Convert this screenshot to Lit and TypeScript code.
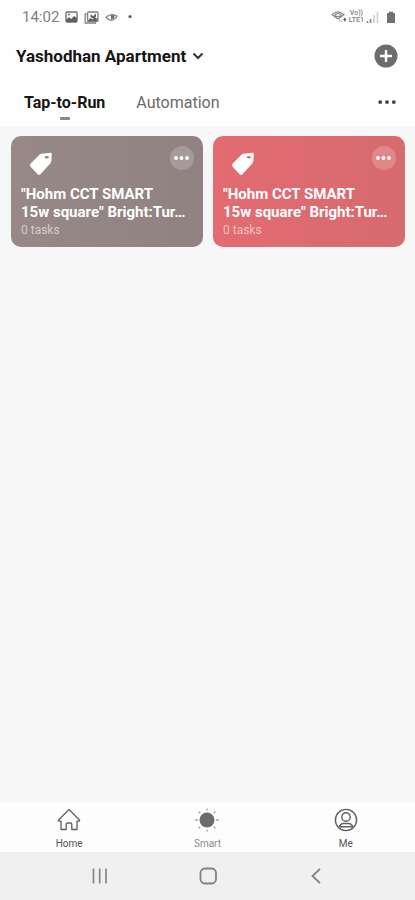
import { LitElement, html, svg, css } from "lit";
import { customElement, property } from "lit/decorators.js";

const tagIcon = svg`
  <path d="M12.4 1.8 L21.4 .8 Q22.9 .7 22.8 2.2 L22.4 8.8 Q22.3 10.2 21.3 11.4 L11.4 22.2 Q10 23.6 8.6 22.2 L1.4 14.6 Q.2 13.2 1.5 11.8 L10.4 2.8 Q11.2 2 12.4 1.8 Z" fill="#fff"/>
  <ellipse cx="17.8" cy="5.2" rx="1.9" ry="1.3" fill="var(--tone)"/>`;

@customElement("scene-card")
export class SceneCard extends LitElement {
  @property() first = "";
  @property() second = "";
  @property() tasks = "";

  static styles = css`
    :host {
      display: block;
      position: relative;
      box-sizing: border-box;
      min-width: 0;
      padding: 16px 10px 9px;
      border-radius: 10px;
      background: linear-gradient(90deg, var(--tone-start), var(--tone));
      color: #fff;
    }
    .tag {
      display: block;
      width: 24px;
      height: 24px;
      margin-left: 8px;
    }
    .more {
      position: absolute;
      top: 10px;
      right: 9px;
      width: 24px;
      height: 24px;
      padding: 0;
      border: 0;
      border-radius: 50%;
      background: rgba(255, 255, 255, 0.2);
    }
    .more svg {
      display: block;
    }
    h2 {
      margin: 9px 0 0;
      font-size: 15px;
      line-height: 18px;
      font-weight: 700;
      white-space: nowrap;
      overflow: hidden;
    }
    p {
      margin: 2px 0 0;
      font-size: 12px;
      line-height: 15px;
      color: rgba(255, 255, 255, 0.58);
    }
  `;

  render() {
    return html`
      <svg class="tag" viewBox="0 0 24 24" aria-hidden="true">${tagIcon}</svg>
      <button class="more" aria-label="More options">
        <svg width="24" height="24" viewBox="0 0 24 24" fill="#fff">
          <circle cx="6" cy="12" r="1.9" />
          <circle cx="11.5" cy="12" r="1.9" />
          <circle cx="17" cy="12" r="1.9" />
        </svg>
      </button>
      <h2>${this.first}<br />${this.second}</h2>
      <p>${this.tasks}</p>
    `;
  }
}

@customElement("app-root")
export class AppRoot extends LitElement {
  static styles = css`
    :host {
      display: flex;
      flex-direction: column;
      min-height: 100vh;
      background: #f7f7f7;
      font-family: Roboto, "Liberation Sans", sans-serif;
      color: #161616;
    }
    svg {
      display: block;
    }
    button {
      padding: 0;
      border: 0;
      background: none;
      font: inherit;
      color: inherit;
    }
    .top {
      background: #fefefe;
    }
    .status {
      display: flex;
      align-items: center;
      justify-content: space-between;
      height: 34px;
      padding: 0 19px 0 22px;
      font-size: 15px;
      color: #808080;
    }
    .group {
      display: flex;
      align-items: center;
    }
    .notices {
      gap: 6px;
    }
    .signals {
      gap: 2px;
    }
    .volte {
      display: grid;
      font-size: 7px;
      line-height: 7px;
      font-weight: 500;
      text-align: center;
    }
    .battery {
      margin-left: 5px;
    }
    .header {
      display: flex;
      align-items: center;
      justify-content: space-between;
      height: 44px;
      padding: 0 17px 0 16px;
    }
    .place {
      display: flex;
      align-items: center;
      gap: 6px;
      font-size: 17px;
      font-weight: 700;
    }
    .tabs {
      display: flex;
      align-items: center;
      height: 48px;
      padding: 0 18px 0 24px;
      font-size: 16px;
    }
    .tab {
      position: relative;
      height: 32px;
      margin-right: 31px;
      color: #6a6a6a;
    }
    .current {
      color: #161616;
      font-weight: 700;
    }
    .current::after {
      content: "";
      position: absolute;
      left: 50%;
      bottom: -2px;
      width: 10px;
      height: 3px;
      margin-left: -5px;
      border-radius: 1px;
      background: #888;
    }
    .menu {
      margin-left: auto;
    }
    main {
      flex: 1;
      display: grid;
      grid-template-columns: 1fr 1fr;
      align-content: start;
      gap: 10px;
      padding: 10px 10px 10px 11px;
    }
    .grey {
      --tone-start: #988988;
      --tone: #8f8280;
    }
    .red {
      --tone-start: #e36b71;
      --tone: #d66b70;
    }
    .bottom {
      display: grid;
      grid-template-columns: repeat(3, 1fr);
      height: 49px;
      background: #fdfdfd;
    }
    .item {
      display: flex;
      flex-direction: column;
      align-items: center;
      gap: 7px;
      padding-top: 5px;
      font-size: 10px;
      line-height: 10px;
      color: #555;
      text-decoration: none;
    }
    .chosen {
      color: #8c8c8c;
    }
    .system {
      display: flex;
      align-items: center;
      justify-content: center;
      gap: 84px;
      height: 48px;
      background: #f0f0f0;
    }
  `;

  render() {
    return html`
      <div class="top">
        <div class="status">
          <div class="group notices">
            <span>14:02</span>
            <svg width="13" height="12" viewBox="0 0 13 12" aria-hidden="true">
              <rect x="1" y="1" width="11" height="10" rx="1" fill="none" stroke="#707070" stroke-width="1.4" />
              <path d="M1 9 L4 6 L6 8 L9 5 L12 7 V11 H1Z" fill="#606060" />
              <circle cx="4" cy="3.6" r="1" fill="#707070" />
            </svg>
            <svg width="15" height="13" viewBox="0 0 15 13" aria-hidden="true">
              <path d="M2.6 3 H1.2 V12 H11.5 V10.5" fill="none" stroke="#808080" stroke-width="1.3" />
              <rect x="3.6" y="1" width="10.4" height="9.4" rx="1" fill="none" stroke="#808080" stroke-width="1.3" />
              <path d="M4 9.5 L6.5 7 L8.5 8.5 L11 6 L13.5 8 V10 H4Z M6.5 3 L9 5.2 L12 2.6 V5.6 L9 7.4 L6.5 6Z" fill="#606060" />
            </svg>
            <svg width="13" height="10" viewBox="0 0 13 10" aria-hidden="true">
              <path d="M1 5.2 Q6 1 12 4.2 Q9 9 5 8 Q2.5 7.4 1 5.2Z" fill="none" stroke="#909090" stroke-width="1.4" />
              <path d="M6 2.8 L9.6 3.6 L9 6.6 L6 7.2Z" fill="#6c6c6c" />
            </svg>
            <svg width="12" height="6" viewBox="0 0 12 6" aria-hidden="true">
              <circle cx="6" cy="2.6" r="1.6" fill="#606060" />
            </svg>
          </div>
          <div class="group signals">
            <svg width="16" height="14" viewBox="0 0 16 14" aria-hidden="true">
              <path d="M1 4.6 Q7 -.8 13 4.6 L7.5 8.6 H6.5 Z M3.5 5 Q7 2.2 10.5 5 M4 5.4 Q7 7.6 10 5.4" fill="none" stroke="#8a8a8a" stroke-width="1.2" />
              <path d="M8.5 9.5 V12 M10.8 9.5 V12" stroke="#b8b8b8" />
              <path d="M13.8 7.4 L15.4 9.6 L13.8 11.8 L12.2 9.6Z" fill="#666" />
            </svg>
            <div class="volte"><span>Vo))</span><span>LTE1</span></div>
            <svg width="13" height="13" viewBox="0 0 13 13" aria-hidden="true">
              <path d="M1.5 10 V12 M4.5 8 V12" stroke="#888" stroke-width="1.6" />
              <path d="M8 4 V12 M11.5 1 V12" stroke="#cfcfcf" stroke-width="1.6" />
            </svg>
            <svg class="battery" width="10" height="13" viewBox="0 0 10 13" aria-hidden="true">
              <path d="M3 .8 H7 V2 H8.2 Q9 2 9 3 V12 H1 V3 Q1 2 1.8 2 H3Z" fill="#707070" />
            </svg>
          </div>
        </div>
        <header class="header">
          <button class="place">
            Yashodhan Apartment
            <svg width="12" height="8" viewBox="0 0 12 8" fill="none" stroke="#333" stroke-width="2">
              <path d="M1.5 1.5 L6 6 L10.5 1.5" />
            </svg>
          </button>
          <button aria-label="Add">
            <svg width="24" height="24" viewBox="0 0 24 24">
              <circle cx="12" cy="12" r="11.5" fill="#6c6c6c" />
              <path d="M12 6 V18 M6 12 H18" stroke="#fff" stroke-width="2.4" />
            </svg>
          </button>
        </header>
        <nav class="tabs" aria-label="Scenes">
          <button class="tab current">Tap-to-Run</button>
          <button class="tab">Automation</button>
          <button class="menu" aria-label="More">
            <svg width="20" height="6" viewBox="0 0 20 6" fill="#3c3c3c">
              <rect x="1.5" y="1.4" width="3.4" height="3.4" rx=".8" />
              <rect x="8.3" y="1.4" width="3.4" height="3.4" rx=".8" />
              <rect x="15.1" y="1.4" width="3.4" height="3.4" rx=".8" />
            </svg>
          </button>
        </nav>
      </div>
      <main>
        <scene-card class="grey" first='"Hohm CCT SMART' second='15w square" Bright:Tur…' tasks="0 tasks"></scene-card>
        <scene-card class="red" first='"Hohm CCT SMART' second='15w square" Bright:Tur…' tasks="0 tasks"></scene-card>
      </main>
      <nav class="bottom" aria-label="Main">
        <a class="item" href="#home">
          <svg width="24" height="24" viewBox="0 0 24 24" fill="none" stroke="#606060" stroke-width="1.3" stroke-linejoin="round">
            <path d="M12 1.5 L22.5 12 Q23 13.2 21.5 13.2 H20 V21.5 H14.8 V16.5 Q14.8 15 13.5 15 H10.5 Q9.2 15 9.2 16.5 V21.5 H4 V13.2 H2.5 Q1 13.2 1.5 12 Z" />
          </svg>
          Home
        </a>
        <a class="item chosen" href="#smart">
          <svg width="24" height="24" viewBox="0 0 24 24" stroke="#9a9a9a" stroke-width="1.3">
            <circle cx="12" cy="12" r="7.5" fill="#6c6c6c" stroke="none" />
            <path d="M12 .5 V2.5 M12 21.5 V23.5 M.3 12 H2.8 M21.2 12 H23.7 M3.6 3.6 L5.2 5.2 M18.8 18.8 L20.4 20.4 M3.6 20.4 L5.2 18.8 M18.8 5.2 L20.4 3.6" />
          </svg>
          Smart
        </a>
        <a class="item" href="#me">
          <svg width="24" height="24" viewBox="0 0 24 24" fill="none" stroke="#606060" stroke-width="1.4">
            <circle cx="12" cy="12" r="10.6" />
            <circle cx="12" cy="9" r="4.2" />
            <path d="M5.2 19.5 Q6 15.5 9.5 15.5 H14.5 Q18 15.5 18.8 19.5 M5.5 18.8 H18.5" />
          </svg>
          Me
        </a>
      </nav>
      <nav class="system" aria-label="System">
        <button aria-label="Recent apps">
          <svg width="24" height="20" viewBox="0 0 24 20" stroke="#858585" stroke-width="1.7">
            <path d="M5.5 2.5 V17.5 M11.7 2.5 V17.5 M18 2.5 V17.5" />
          </svg>
        </button>
        <button aria-label="Home screen">
          <svg width="24" height="20" viewBox="0 0 24 20" fill="none" stroke="#808080" stroke-width="1.8">
            <rect x="4.5" y="2.5" width="15.5" height="15" rx="4.5" />
          </svg>
        </button>
        <button aria-label="Back">
          <svg width="24" height="20" viewBox="0 0 24 20" fill="none" stroke="#808080" stroke-width="1.8">
            <path d="M16 2.8 L8.5 10 L16 17.2" />
          </svg>
        </button>
      </nav>
    `;
  }
}
